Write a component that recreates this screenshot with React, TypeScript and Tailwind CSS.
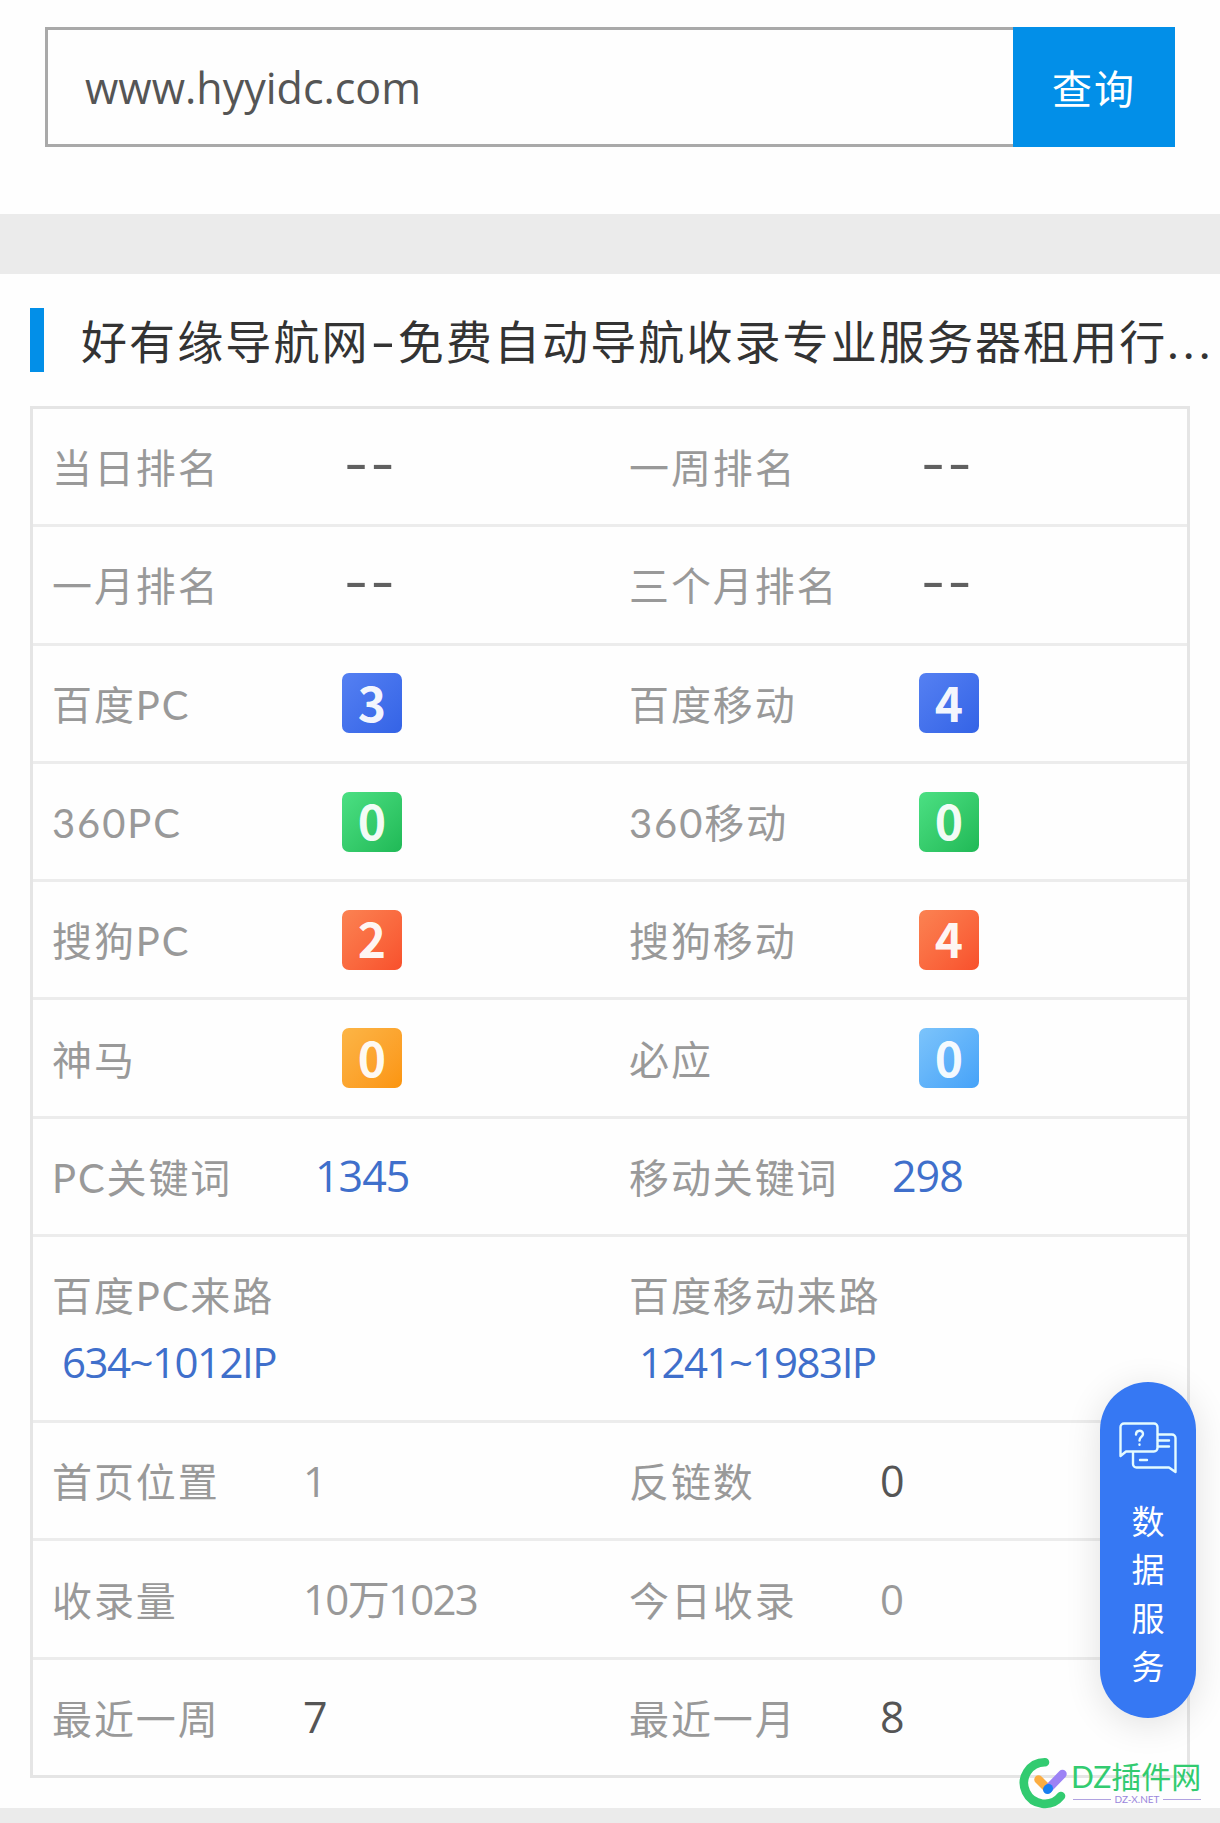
import React from "react";

type Tone = "blue" | "green" | "red" | "orange" | "sky";

interface Cell {
  label: string;
  value: string;
  kind: "dash" | "badge" | "link" | "range" | "text" | "muted";
  tone?: Tone;
}

const rows: Cell[][] = [
  [
    { label: "当日排名", value: "--", kind: "dash" },
    { label: "一周排名", value: "--", kind: "dash" },
  ],
  [
    { label: "一月排名", value: "--", kind: "dash" },
    { label: "三个月排名", value: "--", kind: "dash" },
  ],
  [
    { label: "百度PC", value: "3", kind: "badge", tone: "blue" },
    { label: "百度移动", value: "4", kind: "badge", tone: "blue" },
  ],
  [
    { label: "360PC", value: "0", kind: "badge", tone: "green" },
    { label: "360移动", value: "0", kind: "badge", tone: "green" },
  ],
  [
    { label: "搜狗PC", value: "2", kind: "badge", tone: "red" },
    { label: "搜狗移动", value: "4", kind: "badge", tone: "red" },
  ],
  [
    { label: "神马", value: "0", kind: "badge", tone: "orange" },
    { label: "必应", value: "0", kind: "badge", tone: "sky" },
  ],
  [
    { label: "PC关键词", value: "1345", kind: "link" },
    { label: "移动关键词", value: "298", kind: "link" },
  ],
  [
    { label: "百度PC来路", value: "634~1012IP", kind: "range" },
    { label: "百度移动来路", value: "1241~1983IP", kind: "range" },
  ],
  [
    { label: "首页位置", value: "1", kind: "muted" },
    { label: "反链数", value: "0", kind: "text" },
  ],
  [
    { label: "收录量", value: "10万1023", kind: "muted" },
    { label: "今日收录", value: "0", kind: "muted" },
  ],
  [
    { label: "最近一周", value: "7", kind: "text" },
    { label: "最近一月", value: "8", kind: "text" },
  ],
];

const tones: Record<Tone, string> = {
  blue: "from-[#5580f2] to-[#3463e6]",
  green: "from-[#4be083] to-[#1fb956]",
  red: "from-[#fb8252] to-[#f8502c]",
  orange: "from-[#fcb545] to-[#fb950c]",
  sky: "from-[#7cc4fb] to-[#45a2f8]",
};

function Value({ cell }: { cell: Cell }) {
  switch (cell.kind) {
    case "dash":
      return (
        <span className="ml-[40px] origin-left scale-x-130 pb-[7px] text-[54px] leading-none tracking-[0.3px] text-[#606060]">
          {cell.value}
        </span>
      );
    case "badge":
      return (
        <span
          className={`ml-[39px] flex h-[60px] w-[60px] items-center justify-center rounded-[7px] bg-gradient-to-br pb-[5px] font-['Noto_Sans_CJK_SC',sans-serif] text-[48px] leading-none font-bold text-white/95 ${tones[cell.tone ?? "blue"]}`}
        >
          {cell.value}
        </span>
      );
    case "link":
      return (
        <span className="ml-3 font-['Open_Sans',sans-serif] text-[43px] tracking-[-1px] text-[#3f6fcb]">
          {cell.value}
        </span>
      );
    case "text":
      return (
        <span className="font-['Open_Sans',sans-serif] text-[43px] text-[#555]">
          {cell.value}
        </span>
      );
    default:
      return (
        <span className="font-['Open_Sans','Noto_Sans_CJK_SC',sans-serif] text-[42px] tracking-[-1.7px] text-[#999]">
          {cell.value}
        </span>
      );
  }
}

function InfoCell({ cell }: { cell: Cell }) {
  if (cell.kind === "range") {
    return (
      <div className="flex flex-col justify-center pl-[19px] leading-[65px]">
        <span className="text-[40px] tracking-[1.9px] text-[#999]">
          {cell.label}
        </span>
        <span className="pl-2.5 font-['Open_Sans',sans-serif] text-[42px] tracking-[-1.5px] text-[#3f6fcb]">
          {cell.value}
        </span>
      </div>
    );
  }
  return (
    <div className="flex items-center pl-[19px] leading-[60px] whitespace-nowrap">
      <span className="w-[251px] shrink-0 pt-[3px] text-[40px] tracking-[1.9px] text-[#999]">
        {cell.label}
      </span>
      <Value cell={cell} />
    </div>
  );
}

function ServiceButton() {
  return (
    <button className="absolute top-[1382px] left-[1100px] flex h-[336px] w-24 flex-col items-center rounded-full bg-[#3678f3] pt-10 text-white shadow-[0_6px_36px_rgba(0,0,0,0.12)]">
      <svg
        width="58"
        height="52"
        viewBox="0 0 58 52"
        fill="none"
        stroke="#e4fbff"
        strokeWidth="2.4"
        strokeLinecap="round"
        strokeLinejoin="round"
      >
        <path d="M1.5 33V5a3.5 3.5 0 0 1 3.5-3.5h30a3.5 3.5 0 0 1 3.5 3.5v21a3.5 3.5 0 0 1-3.5 3.5H7L1.5 34z" />
        <path d="M39 12.500h14a3.500 3.500 0 0 1 3.500 3.500v34L50 45.500H17.500A3.500 3.500 0 0 1 14 42V30" />
        <path d="M39 18.500h11M39 24.500h11M21 38h7" />
        <path d="M17 12.500c0-5 7-5 7-.5 0 3-3.500 3-3.500 6.500M20.500 22.500v.3" />
      </svg>
      <span className="mt-[23px] flex flex-col text-[33px] leading-[48.300px]">
        <span>数</span>
        <span>据</span>
        <span>服</span>
        <span>务</span>
      </span>
    </button>
  );
}

function SiteLogo() {
  return (
    <div className="absolute top-[1757px] left-[1019px] flex">
      <svg width="50" height="52" viewBox="0 0 50 52" fill="none" strokeLinecap="round">
        <path d="M26 5.200A20.800 20.800 0 1 0 42 39" stroke="#32cb70" strokeWidth="8.600" />
        <path d="M19.500 22.500l9 9" stroke="#fbad42" strokeWidth="8.500" />
        <path d="M29 32l14.500-15" stroke="#9c82f5" strokeWidth="8.500" />
        <path d="M28.500 32.500l1-1" stroke="#177ff0" strokeWidth="9" />
      </svg>
      <div className="ml-0.5 w-[130px]">
        <div className="h-[38px] text-[30px] leading-[38px] whitespace-nowrap text-[#32cb70]">
          DZ插件网
        </div>
        <div className="mt-[-1px] flex items-center gap-[3px] pl-0.5 text-[10px] leading-[10px] text-[#9a86dc]">
          <span className="h-px flex-1 bg-[#b0a2e0]" />
          DZ-X.NET
          <span className="h-px flex-1 bg-[#b0a2e0]" />
        </div>
      </div>
    </div>
  );
}

function App() {
  return (
    <div className="relative h-[1823px] w-[1220px] overflow-hidden bg-[#fefefe] font-['Lato','Noto_Sans_CJK_SC',sans-serif]">
      {/* Search */}
      <div className="flex h-[214px] px-[45px] pt-[27px]">
        <div className="flex h-[120px] flex-1 items-center border-[3px] border-r-0 border-[#a9a9a9] pt-[3px] pl-[37px] font-['Open_Sans','Noto_Sans_CJK_SC',sans-serif] text-[43px] text-[#555]">
          www.hyyidc.com
        </div>
        <button className="h-[120px] w-[162px] bg-[#028fe8] pt-[3px] text-[40px] tracking-[1.9px] text-white">
          查询
        </button>
      </div>

      <div className="h-[60px] bg-[#ebebeb]" />

      {/* Site title */}
      <div className="flex h-[132px] items-start pt-[34px] pl-[30px]">
        <span className="h-16 w-3.5 shrink-0 bg-[#028fe8]" />
        <h1 className="mt-[2px] ml-[37px] text-[46px] leading-[64px] tracking-[2.1px] whitespace-nowrap text-[#333]">
          好有缘导航网
          <span className="mr-[4px] ml-[5px] inline-block scale-x-160">-</span>
          免费自动导航收录专业服务器租用行
          <span className="tracking-[5px]">...</span>
        </h1>
      </div>

      {/* Ranking table */}
      <div className="ml-[30px] w-[1160px] border-[3px] border-[#e5e5e5]">
        {rows.map((row, index) => (
          <div
            key={index}
            className={`grid grid-cols-2 border-[#ececec] ${
              index === rows.length - 1
                ? "h-[115.4px]"
                : row[0].kind === "range"
                  ? "h-[186px] border-b-[3px]"
                  : "h-[118.3px] border-b-[3px]"
            }`}
          >
            {row.map((cell) => (
              <InfoCell key={cell.label} cell={cell} />
            ))}
          </div>
        ))}
      </div>

      <div className="mt-[30px] h-[15px] bg-[#ebebeb]" />

      <ServiceButton />
      <SiteLogo />
    </div>
  );
}

export default App;
